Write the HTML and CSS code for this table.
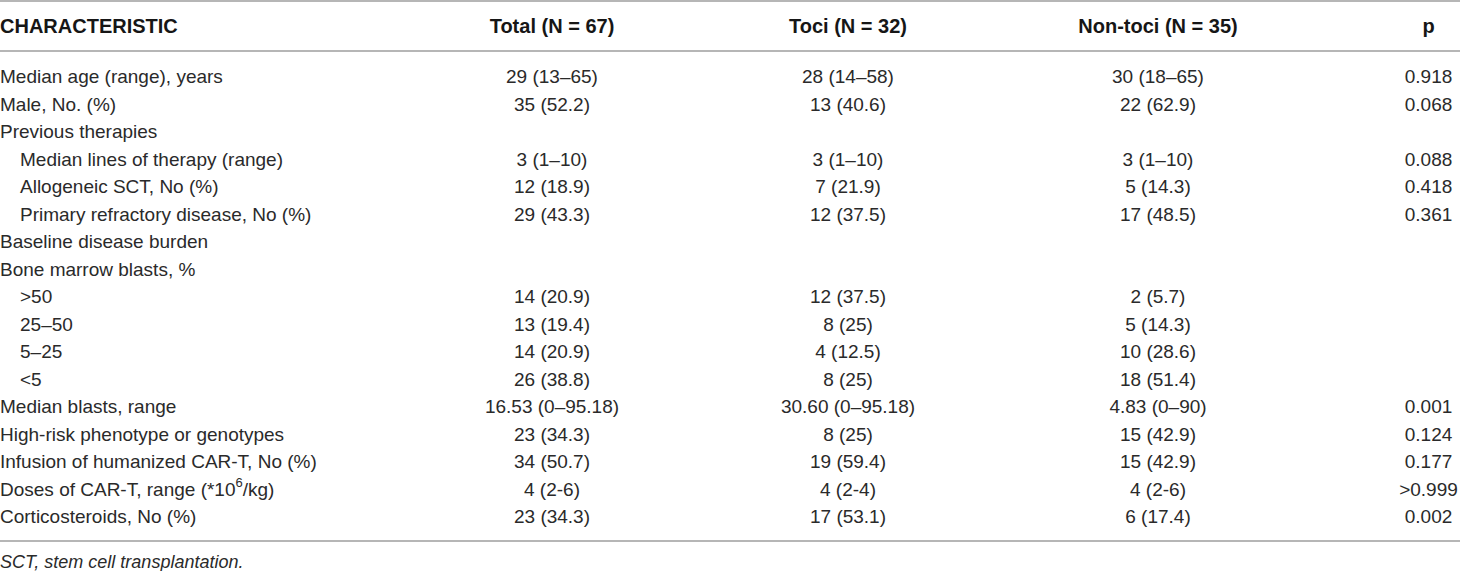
FILE: index.html
```html
<!DOCTYPE html>
<html lang="en">
<head>
<meta charset="utf-8">
<title>Patient characteristics</title>
<link rel="stylesheet" href="styles.css">
</head>
<body>
<div class="table">
  <div class="row head">
    <div class="c1">CHARACTERISTIC</div>
    <div class="cv">Total (N = 67)</div>
    <div class="cv">Toci (N = 32)</div>
    <div class="cv">Non-toci (N = 35)</div>
    <div class="cv cp">p</div>
  </div>
  <div class="body">
    <div class="row"><div class="c1">Median age (range), years</div><div class="cv">29 (13–65)</div><div class="cv">28 (14–58)</div><div class="cv">30 (18–65)</div><div class="cv cp">0.918</div></div>
    <div class="row"><div class="c1">Male, No. (%)</div><div class="cv">35 (52.2)</div><div class="cv">13 (40.6)</div><div class="cv">22 (62.9)</div><div class="cv cp">0.068</div></div>
    <div class="row"><div class="c1">Previous therapies</div><div class="cv"></div><div class="cv"></div><div class="cv"></div><div class="cv cp"></div></div>
    <div class="row"><div class="c1 sub">Median lines of therapy (range)</div><div class="cv">3 (1–10)</div><div class="cv">3 (1–10)</div><div class="cv">3 (1–10)</div><div class="cv cp">0.088</div></div>
    <div class="row"><div class="c1 sub">Allogeneic SCT, No (%)</div><div class="cv">12 (18.9)</div><div class="cv">7 (21.9)</div><div class="cv">5 (14.3)</div><div class="cv cp">0.418</div></div>
    <div class="row"><div class="c1 sub">Primary refractory disease, No (%)</div><div class="cv">29 (43.3)</div><div class="cv">12 (37.5)</div><div class="cv">17 (48.5)</div><div class="cv cp">0.361</div></div>
    <div class="row"><div class="c1">Baseline disease burden</div><div class="cv"></div><div class="cv"></div><div class="cv"></div><div class="cv cp"></div></div>
    <div class="row"><div class="c1">Bone marrow blasts, %</div><div class="cv"></div><div class="cv"></div><div class="cv"></div><div class="cv cp"></div></div>
    <div class="row"><div class="c1 sub">&gt;50</div><div class="cv">14 (20.9)</div><div class="cv">12 (37.5)</div><div class="cv">2 (5.7)</div><div class="cv cp"></div></div>
    <div class="row"><div class="c1 sub">25–50</div><div class="cv">13 (19.4)</div><div class="cv">8 (25)</div><div class="cv">5 (14.3)</div><div class="cv cp"></div></div>
    <div class="row"><div class="c1 sub">5–25</div><div class="cv">14 (20.9)</div><div class="cv">4 (12.5)</div><div class="cv">10 (28.6)</div><div class="cv cp"></div></div>
    <div class="row"><div class="c1 sub">&lt;5</div><div class="cv">26 (38.8)</div><div class="cv">8 (25)</div><div class="cv">18 (51.4)</div><div class="cv cp"></div></div>
    <div class="row"><div class="c1">Median blasts, range</div><div class="cv">16.53 (0–95.18)</div><div class="cv">30.60 (0–95.18)</div><div class="cv">4.83 (0–90)</div><div class="cv cp">0.001</div></div>
    <div class="row"><div class="c1">High-risk phenotype or genotypes</div><div class="cv">23 (34.3)</div><div class="cv">8 (25)</div><div class="cv">15 (42.9)</div><div class="cv cp">0.124</div></div>
    <div class="row"><div class="c1">Infusion of humanized CAR-T, No (%)</div><div class="cv">34 (50.7)</div><div class="cv">19 (59.4)</div><div class="cv">15 (42.9)</div><div class="cv cp">0.177</div></div>
    <div class="row"><div class="c1">Doses of CAR-T, range (*10<sup>6</sup>/kg)</div><div class="cv">4 (2-6)</div><div class="cv">4 (2-4)</div><div class="cv">4 (2-6)</div><div class="cv cp">&gt;0.999</div></div>
    <div class="row"><div class="c1">Corticosteroids, No (%)</div><div class="cv">23 (34.3)</div><div class="cv">17 (53.1)</div><div class="cv">6 (17.4)</div><div class="cv cp">0.002</div></div>
  </div>
</div>
<p class="note">SCT, stem cell transplantation.</p>
</body>
</html>
```

FILE: styles.css
```css
html, body {
  margin: 0;
  padding: 0;
  background: #ffffff;
}

body {
  width: 1460px;
  font-family: "Liberation Sans", Arial, Helvetica, sans-serif;
  font-size: 19px;
  color: #2a2a2a;
}

.table {
  border-top: 2px solid #b6b6b6;
  border-bottom: 2px solid #b6b6b6;
}

.row {
  display: grid;
  grid-template-columns: 400px 304px 288px 332px 1fr;
  line-height: 27.5px;
  height: 27.5px;
  white-space: nowrap;
}

.head {
  height: 48px;
  line-height: 48px;
  font-size: 20px;
  font-weight: bold;
  color: #161616;
  border-bottom: 2px solid #b6b6b6;
}

.body {
  padding: 11px 0 9px;
}

.c1 {
  text-align: left;
}

.c1.sub {
  padding-left: 20px;
}

.cv {
  text-align: center;
}

.cp {
  padding-left: 73px;
}

sup {
  font-size: 13px;
  line-height: 0;
  vertical-align: 9px;
}

.note {
  margin: 9px 0 0;
  font-size: 18px;
  line-height: 22px;
  font-style: italic;
  color: #2a2a2a;
}
```
